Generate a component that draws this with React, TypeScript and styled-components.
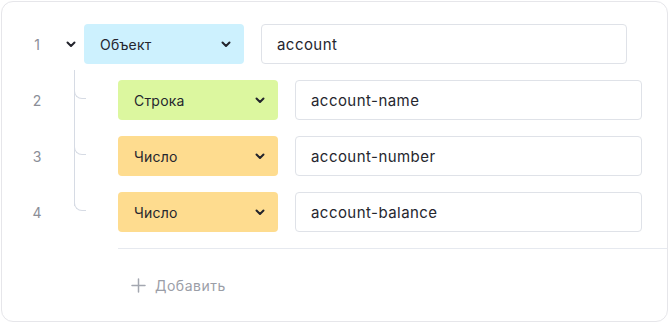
import React from 'react';
import styled, { createGlobalStyle } from 'styled-components';

const GlobalStyle = createGlobalStyle`
  html, body {
    margin: 0;
    padding: 0;
    background: #ffffff;
  }
  body {
    font-family: Inter, "Noto Sans", sans-serif;
    color: #272833;
  }
`;

type Kind = 'object' | 'string' | 'number';

const kindColors: Record<Kind, string> = {
  object: '#cdf1fe',
  string: '#dcf79f',
  number: '#fedc8f',
};

const kindLabels: Record<Kind, string> = {
  object: 'Объект',
  string: 'Строка',
  number: 'Число',
};

const Chevron = () => (
  <svg width="10" height="7" viewBox="0 0 10 7" fill="none">
    <path d="M1.5 1.5L5 5L8.5 1.5" stroke="#23242c" strokeWidth="2" strokeLinecap="round" strokeLinejoin="round" />
  </svg>
);

const Plus = () => (
  <svg width="15" height="15" viewBox="0 0 15 15" fill="none">
    <path d="M7.5 1V14M1 7.5H14" stroke="#a3a7b0" strokeWidth="1.5" strokeLinecap="round" />
  </svg>
);

const SchemaEditor = () => {
  const children: { kind: Kind; name: string }[] = [
    { kind: 'string', name: 'account-name' },
    { kind: 'number', name: 'account-number' },
    { kind: 'number', name: 'account-balance' },
  ];

  return (
    <Page>
      <Card>
        <Row>
          <LineNumber>1</LineNumber>
          <Toggle>
            <Chevron />
          </Toggle>
          <TypeSelect $kind="object">
            <span>{kindLabels.object}</span>
            <Chevron />
          </TypeSelect>
          <NameField $width={366}>account</NameField>
        </Row>

        <ChildList>
          {children.map((child, i) => (
            <ChildRow key={child.name}>
              <LineNumber>{i + 2}</LineNumber>
              <Branch />
              <TypeSelect $kind={child.kind}>
                <span>{kindLabels[child.kind]}</span>
                <Chevron />
              </TypeSelect>
              <NameField $width={347}>{child.name}</NameField>
            </ChildRow>
          ))}
        </ChildList>

        <Divider />

        <AddButton>
          <Plus />
          <span>Добавить</span>
        </AddButton>
      </Card>
    </Page>
  );
};

const Page = styled.div`
  padding: 1px;
`;

const Card = styled.div`
  box-sizing: border-box;
  width: 667px;
  height: 321px;
  border: 1.5px solid #e6e6ea;
  border-radius: 12px;
  padding-top: 22px;
  display: flex;
  flex-direction: column;
`;

const Row = styled.div`
  display: flex;
  align-items: center;
  height: 40px;
  padding-left: 22px;
`;

const LineNumber = styled.div`
  width: 26px;
  text-align: center;
  font-size: 14px;
  color: #8b8e97;
`;

const Toggle = styled.div`
  width: 22px;
  margin-left: 10px;
  margin-right: 2px;
  display: flex;
  justify-content: center;
  align-items: center;
`;

const TypeSelect = styled.div<{ $kind: Kind }>`
  box-sizing: border-box;
  width: 160px;
  height: 40px;
  border-radius: 4px;
  background: ${(p) => kindColors[p.$kind]};
  display: flex;
  align-items: center;
  justify-content: space-between;
  padding: 0 13px 0 16px;
  font-size: 14px;
  letter-spacing: 0.2px;
  color: #25262e;
`;

const NameField = styled.div<{ $width: number }>`
  box-sizing: border-box;
  width: ${(p) => p.$width}px;
  height: 40px;
  margin-left: 17px;
  border: 1px solid #dfe2e8;
  border-radius: 4px;
  display: flex;
  align-items: center;
  padding-left: 15px;
  font-size: 15px;
  letter-spacing: 0.45px;
  color: #25262e;
`;

const ChildList = styled.div`
  position: relative;
  display: flex;
  flex-direction: column;
  gap: 16px;
  margin-top: 16px;

  &::before {
    content: '';
    position: absolute;
    left: 71.5px;
    top: -10px;
    bottom: 26px;
    border-left: 1px solid #d6dbe4;
  }
`;

const ChildRow = styled(Row)``;

const Branch = styled.div`
  box-sizing: border-box;
  align-self: flex-start;
  width: 12px;
  height: 19px;
  margin-left: 24px;
  margin-right: 32px;
  border-left: 1px solid #d6dbe4;
  border-bottom: 1px solid #d6dbe4;
  border-bottom-left-radius: 8px;
`;

const Divider = styled.div`
  margin-top: 16px;
  margin-left: 116px;
  border-top: 1px solid #e6e9ef;
`;

const AddButton = styled.div`
  display: flex;
  align-items: center;
  gap: 9px;
  margin-top: 28px;
  margin-left: 129px;
  font-size: 14px;
  letter-spacing: 0.5px;
  color: #9b9ea7;
`;

export default function App() {
  return (
    <>
      <GlobalStyle />
      <SchemaEditor />
    </>
  );
}
